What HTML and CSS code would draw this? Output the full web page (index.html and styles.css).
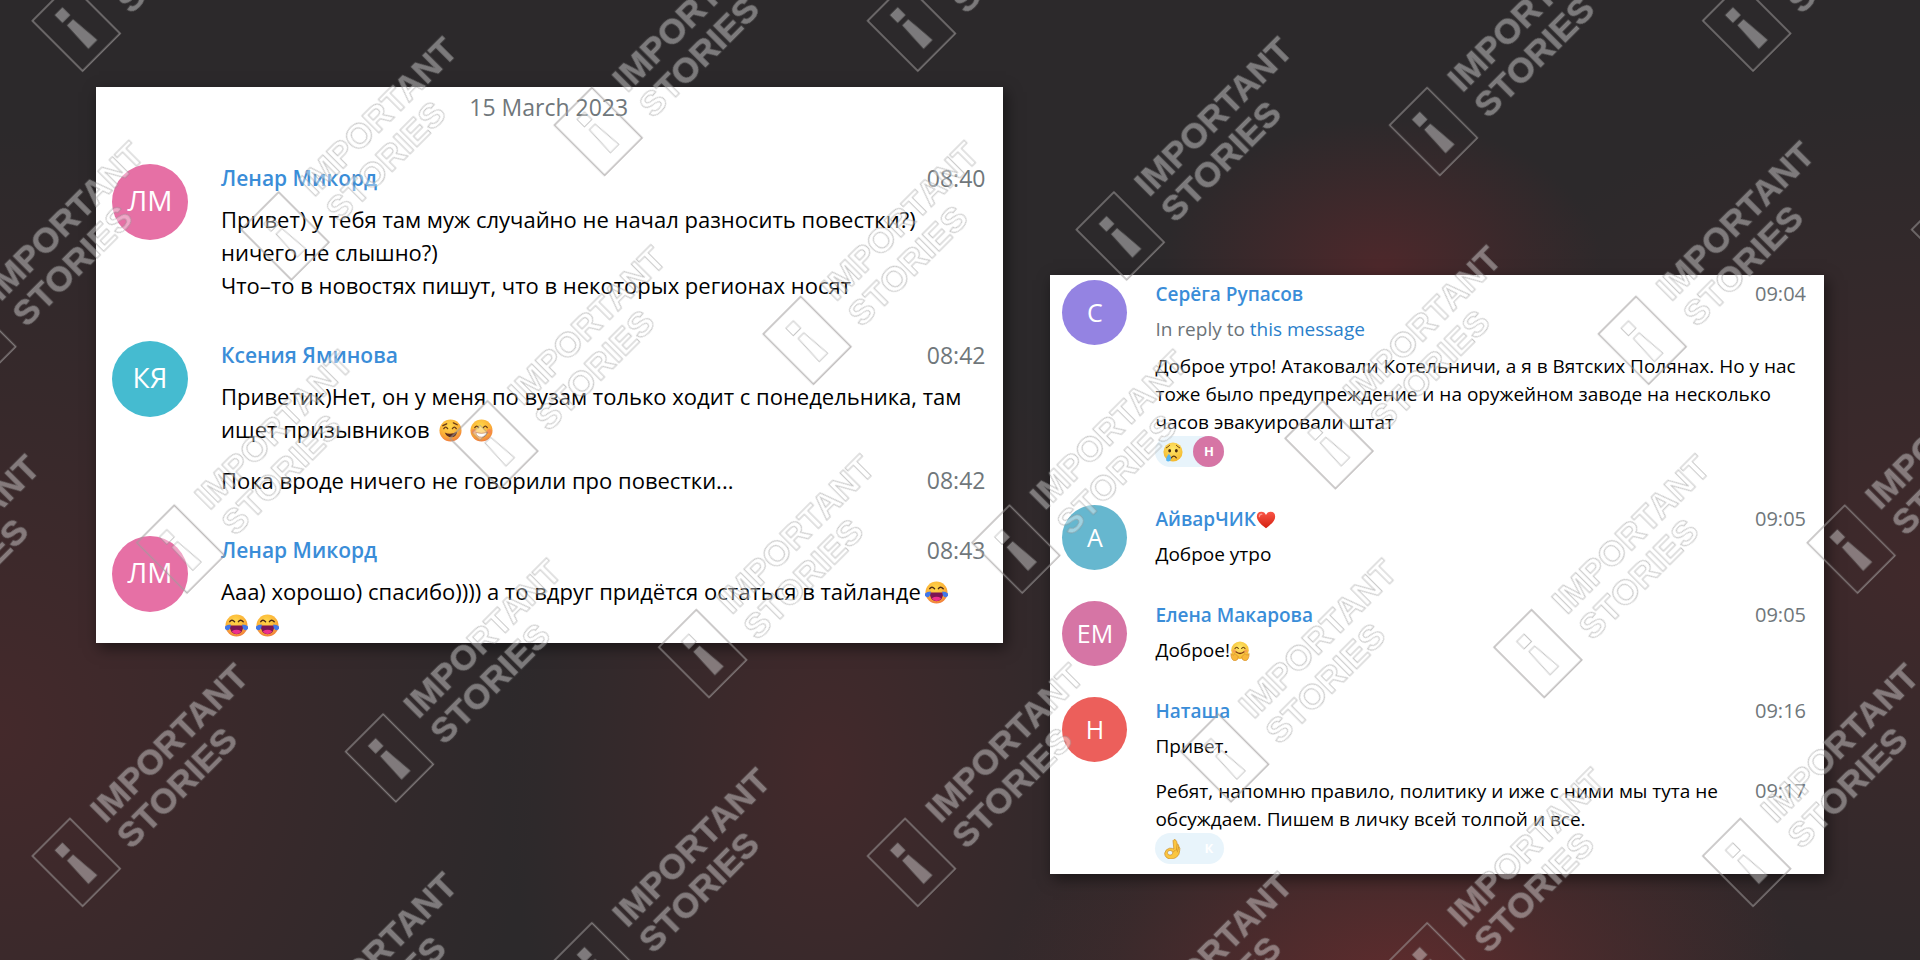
FILE: index.html
```html
<!DOCTYPE html>
<html lang="ru">
<head>
    <meta charset="UTF-8">
    <meta name="viewport" content="width=device-width, initial-scale=1.0">
    <link rel="stylesheet" href="styles.css">
    <title>Important Stories</title>
</head>
<body>

<!-- emoji set -->
<svg class="defs" width="0" height="0" aria-hidden="true">
    <defs>
        <radialGradient id="face" cx="45%" cy="30%" r="75%">
            <stop offset="0" stop-color="#ffd84a"/>
            <stop offset="0.6" stop-color="#fbb036"/>
            <stop offset="1" stop-color="#ee7540"/>
        </radialGradient>
        <radialGradient id="face-light" cx="50%" cy="35%" r="70%">
            <stop offset="0" stop-color="#ffe96b"/>
            <stop offset="1" stop-color="#f3b327"/>
        </radialGradient>
        <linearGradient id="heart-fill" x1="0" y1="0" x2="0" y2="1">
            <stop offset="0" stop-color="#fa5547"/>
            <stop offset="1" stop-color="#d3200f"/>
        </linearGradient>
        <symbol id="smile" viewBox="0 0 24 24">
            <circle cx="12" cy="12" r="11.5" fill="url(#face)"/>
            <path d="M5 10q2-3 4 0M14 10q2-3 4 0M4 7l4-2M15 4l4 2" fill="none" stroke="#6a3b16" stroke-width="1.4" stroke-linecap="round"/>
            <path d="M6 14q6 3 13-1q-1 6-6 6q-5 0-7-5z" fill="#5d2c1c"/>
        </symbol>
        <symbol id="grin" viewBox="0 0 24 24">
            <circle cx="12" cy="12" r="11.5" fill="url(#face)"/>
            <path d="M5 9q2-3 4 0M14 9q2-3 4 0" fill="none" stroke="#6a3b16" stroke-width="1.4" stroke-linecap="round"/>
            <circle cx="4" cy="13" r="2.5" fill="#f4735c" opacity="0.6"/>
            <circle cx="20" cy="13" r="2.5" fill="#f4735c" opacity="0.6"/>
            <path d="M6 14q6 2 12 0q-1 5-6 5q-5 0-6-5z" fill="#fff" stroke="#a35128" stroke-width="0.8"/>
        </symbol>
        <symbol id="joy" viewBox="0 0 24 24">
            <circle cx="12" cy="12" r="11.5" fill="url(#face)"/>
            <path d="M5 8q2-3 5 0M14 8q2-3 5 0" fill="none" stroke="#4d2a16" stroke-width="1.5" stroke-linecap="round"/>
            <path d="M5 12h14q0 9-7 9q-7 0-7-9z" fill="#7c1554"/>
            <path d="M7 18q5-3 10 0q-2 3-5 3q-3 0-5-3z" fill="#ee2f8c"/>
            <path d="M6 11q0 6-4 6q-3-1-2-4q2-2 6-2zM18 11q0 6 4 6q3-1 2-4q-2-2-6-2z" fill="#4277e8"/>
        </symbol>
        <symbol id="cry" viewBox="0 0 24 24">
            <circle cx="12" cy="12" r="11.5" fill="url(#face-light)"/>
            <path d="M4 7q2-1 4-3M16 4q2 2 4 3" fill="none" stroke="#7a4b12" stroke-width="1.2" stroke-linecap="round"/>
            <ellipse cx="8" cy="10.5" rx="1.7" ry="2.2" fill="#4b2b0e"/>
            <ellipse cx="16" cy="10.5" rx="1.7" ry="2.2" fill="#4b2b0e"/>
            <path d="M10 19q3-4 6 0" fill="none" stroke="#5c3510" stroke-width="1.5" stroke-linecap="round"/>
            <path d="M7 14q4 4 2 8q-3 3-5 0q-1-3 3-8z" fill="#56b4ee"/>
        </symbol>
        <symbol id="hug" viewBox="0 0 24 24">
            <circle cx="12" cy="11" r="10.5" fill="url(#face-light)"/>
            <path d="M6 9q2-3 4 0M14 9q2-3 4 0" fill="none" stroke="#6a3f10" stroke-width="1.4" stroke-linecap="round"/>
            <path d="M7 13q5 4 10 0" fill="none" stroke="#7c3514" stroke-width="1.5" stroke-linecap="round"/>
            <circle cx="5" cy="12" r="2" fill="#f58a55" opacity="0.6"/>
            <circle cx="19" cy="12" r="2" fill="#f58a55" opacity="0.6"/>
            <path d="M1 15l3 2 2-2 4 4q0 4-4 5q-5-1-5-9zM23 15l-3 2-2-2-4 4q0 4 4 5q5-1 5-9z" fill="#f8b83c" stroke="#cf8420" stroke-width="0.7"/>
        </symbol>
        <symbol id="ok-hand" viewBox="0 0 24 24">
            <path d="M13 12L12 2q1-2 3-1q2 2 2 5q2 0 2 3q2 2 1 5q0 5-4 8q-3 2-7 2q-7-1-7-7q1-5 6-6q4 0 5 1z" fill="#fbc63f" stroke="#c98a24" stroke-width="0.8"/>
            <ellipse cx="8.5" cy="16.5" rx="3.2" ry="2.8" fill="#e8f4fb" stroke="#c98a24" stroke-width="0.8"/>
            <path d="M17 6l-1 8M19 9l-2 7M12 16l3-3" fill="none" stroke="#c98a24" stroke-width="0.8"/>
        </symbol>
        <symbol id="heart" viewBox="0 0 24 24">
            <path d="M12 22Q1 14 1 8q0-6 5.500-6q4 0 5.500 4q1.500-4 5.500-4Q23 2 23 8q0 6-11 14z" fill="url(#heart-fill)"/>
            <path d="M4 8q0-3 3-3" fill="none" stroke="#ff9c92" stroke-width="1.5" stroke-linecap="round"/>
        </symbol>
    </defs>
</svg>

<main class="board">

    <section class="chat chat-large">
        <div class="date">15 March 2023</div>

        <article class="message">
            <div class="avatar pink">ЛМ</div>
            <div class="content">
                <time class="time">08:40</time>
                <div class="name">Ленар Микорд</div>
                <p class="text">Привет) у тебя там муж случайно не начал разносить повестки?) ничего не слышно?)<br>Что–то в новостях пишут, что в некоторых регионах носят</p>
            </div>
        </article>

        <article class="message">
            <div class="avatar teal">КЯ</div>
            <div class="content">
                <time class="time">08:42</time>
                <div class="name">Ксения Яминова</div>
                <p class="text">Приветик)Нет, он у меня по вузам только ходит с понедельника, там ищет призывников <svg class="emoji"><use href="#smile"/></svg><svg class="emoji"><use href="#grin"/></svg></p>
                <div class="joined">
                    <time class="time">08:42</time>
                    <p class="text">Пока вроде ничего не говорили про повестки...</p>
                </div>
            </div>
        </article>

        <article class="message">
            <div class="avatar pink">ЛМ</div>
            <div class="content">
                <time class="time">08:43</time>
                <div class="name">Ленар Микорд</div>
                <p class="text">Ааа) хорошо) спасибо)))) а то вдруг придётся остаться в тайланде<svg class="emoji"><use href="#joy"/></svg><br><svg class="emoji"><use href="#joy"/></svg><svg class="emoji"><use href="#joy"/></svg></p>
            </div>
        </article>
    </section>

    <section class="chat chat-small">
        <article class="message">
            <div class="avatar violet">С</div>
            <div class="content">
                <time class="time">09:04</time>
                <div class="name">Серёга Рупасов</div>
                <p class="reply">In reply to <a href="#">this message</a></p>
                <p class="text">Доброе утро! Атаковали Котельничи, а я в Вятских Полянах. Но у нас тоже было предупреждение и на оружейном заводе на несколько часов эвакуировали штат</p>
                <div class="reaction">
                    <svg class="emoji"><use href="#cry"/></svg>
                    <span class="who rose">Н</span>
                </div>
            </div>
        </article>

        <article class="message">
            <div class="avatar blue">А</div>
            <div class="content">
                <time class="time">09:05</time>
                <div class="name">АйварЧИК<svg class="emoji"><use href="#heart"/></svg></div>
                <p class="text">Доброе утро</p>
            </div>
        </article>

        <article class="message">
            <div class="avatar rose">ЕМ</div>
            <div class="content">
                <time class="time">09:05</time>
                <div class="name">Елена Макарова</div>
                <p class="text">Доброе!<svg class="emoji"><use href="#hug"/></svg></p>
            </div>
        </article>

        <article class="message">
            <div class="avatar red">Н</div>
            <div class="content">
                <time class="time">09:16</time>
                <div class="name">Наташа</div>
                <p class="text">Привет.</p>
                <div class="joined">
                    <time class="time">09:17</time>
                    <p class="text">Ребят, напомню правило, политику и иже с ними мы тута не обсуждаем. Пишем в личку всей толпой и все.</p>
                    <div class="reaction">
                        <svg class="emoji"><use href="#ok-hand"/></svg>
                        <span class="who">К</span>
                    </div>
                </div>
            </div>
        </article>
    </section>

</main>

<!-- repeating watermark over the whole page -->
<svg class="watermark" width="100%" height="100%" aria-hidden="true">
    <defs>
        <g id="mark">
            <rect class="mark-frame" x="1" y="1" width="53" height="71"/>
            <path class="mark-fill" d="M21 13h10.500v10.500h-10.500zM22.500 29h8l2.500 31h-12z"/>
            <text class="mark-fill" x="75" y="30">IMPORTANT</text>
            <text class="mark-fill" x="75" y="67">STORIES</text>
        </g>
        <pattern id="marks" width="590.6" height="295.3" patternUnits="userSpaceOnUse" patternTransform="translate(31 856) rotate(-45)">
            <use href="#mark"/>
            <use href="#mark" x="295.3" y="147.65"/>
        </pattern>
    </defs>
    <rect width="100%" height="100%" fill="url(#marks)"/>
</svg>

</body>
</html>
```
FILE: styles.css
```css
body {
    margin: 0;
    min-height: 100vh;
    font-family: "Open Sans", "Noto Sans", sans-serif;
    color: #000;
    position: relative;
    overflow: hidden;
    background-color: #2c292b;
    background-image:
        radial-gradient(ellipse 400px 260px at 73% 103%, #602c2d, transparent),
        radial-gradient(ellipse 220px 150px at 72% 28%, #4e282b, transparent),
        radial-gradient(ellipse 560px 480px at 100% 60%, #40292b, transparent),
        radial-gradient(ellipse 320px 480px at 43% 80%, #43292b, transparent),
        radial-gradient(ellipse 540px 600px at 0% 76%, #44292b, transparent);
}

p {
    margin: 0;
}

.defs {
    position: absolute;
}

.board {
    display: flex;
    align-items: flex-start;
    gap: 47px;
    padding: 87px 96px;
}

.chat {
    background: #fff;
    box-shadow: 3px 5px 14px rgba(0, 0, 0, 0.5);
    box-sizing: border-box;
    min-width: 0;
}

.chat-large {
    flex: 908 1 0;
    padding: 4px 18px 2px 16px;
    font-size: 22px;
    line-height: 33px;
}

.chat-small {
    flex: 773 1 0;
    margin-top: 188px;
    padding: 5px 18px 3px 12px;
    font-size: 19px;
    line-height: 28px;
}

.date {
    text-align: center;
    color: #70777b;
    font-size: 23px;
    margin-bottom: 38px;
}

.message {
    display: flex;
}

.content {
    flex: 1;
    min-width: 0;
}

.chat-large .message {
    gap: 33px;
}

.chat-small .message {
    gap: 28px;
}

.chat-large .message + .message {
    margin-top: 37px;
}

.chat-small .message + .message {
    margin-top: 31px;
}

.avatar {
    flex: none;
    border-radius: 50%;
    color: #fff;
    font-weight: 500;
    text-align: center;
}

.chat-large .avatar {
    width: 76px;
    height: 76px;
    line-height: 72px;
    margin-top: 2px;
    font-size: 28px;
}

.chat-small .avatar {
    width: 65px;
    height: 65px;
    line-height: 65px;
    font-size: 25px;
}

.pink {
    background: #e670a5;
}

.teal {
    background: #45bbd0;
}

.violet {
    background: #9483e2;
}

.blue {
    background: #66b7cf;
}

.rose {
    background: #d675a5;
}

.red {
    background: #ec5f5b;
}

.name {
    font-weight: 600;
    color: #3a8dd8;
}

.chat-large .name {
    font-size: 21px;
    margin-bottom: 8px;
}

.chat-small .name {
    line-height: 29px;
    margin-bottom: 6px;
}

.time {
    float: right;
    color: #70777b;
}

.chat-large .time {
    font-size: 23px;
}

.chat-small .time {
    font-size: 20px;
}

.reply {
    color: #6c7378;
    margin-bottom: 9px;
}

.reply a {
    color: #2a80cb;
    text-decoration: none;
}

.chat-large .joined {
    margin-top: 18px;
}

.chat-small .joined {
    margin-top: 17px;
}

.emoji {
    width: 20px;
    height: 20px;
    vertical-align: -4px;
}

.chat-large .emoji {
    width: 23px;
    height: 23px;
    margin: 0 4px;
}

.reaction {
    display: flex;
    align-items: center;
    justify-content: space-between;
    width: 69px;
    height: 31px;
    padding-left: 8px;
    margin-bottom: 7px;
    box-sizing: border-box;
    border-radius: 16px;
    background: #e8f4fb;
}

.who {
    width: 31px;
    height: 31px;
    border-radius: 50%;
    color: #fff;
    font-size: 13px;
    font-weight: 700;
    line-height: 31px;
    text-align: center;
}

.watermark {
    position: absolute;
    inset: 0;
    pointer-events: none;
}

.mark-fill {
    font-family: "Liberation Sans", Arial, sans-serif;
    font-size: 35px;
    font-weight: 700;
    fill: rgba(255, 255, 255, 0.38);
    stroke: rgba(130, 130, 130, 0.45);
    stroke-width: 1px;
}

.mark-frame {
    fill: none;
    stroke: rgba(160, 155, 155, 0.7);
    stroke-width: 1.5;
}
```
